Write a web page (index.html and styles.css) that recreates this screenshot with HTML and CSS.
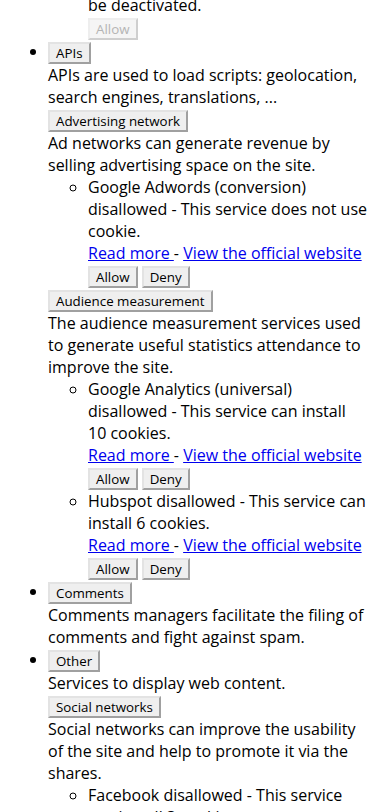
FILE: index.html
```html
<!DOCTYPE html>
<html lang="en">
<head>
<meta charset="utf-8">
<meta name="viewport" content="width=device-width, initial-scale=1">
<title>Cookie services</title>
<link rel="stylesheet" href="styles.css">
</head>
<body>
<ul class="cats">
  <li class="cat cat-open">
    <ul class="svcs">
      <li class="svc svc-cut">be deactivated.
        <div class="btns"><button class="btn" disabled>Allow</button></div>
      </li>
    </ul>
  </li>
  <li class="cat">
    <button class="btn">APIs</button>
    <div class="desc">APIs are used to load scripts: geolocation, search engines, translations, ...</div>
  </li>
  <li class="cat cat-open">
    <button class="btn">Advertising network</button>
    <div class="desc">Ad networks can generate revenue by selling advertising space on the site.</div>
    <ul class="svcs">
      <li class="svc">Google Adwords (conversion) disallowed - This service does not use cookie.
        <div class="links"><a href="#">Read more </a>- <a href="#">View the official website</a></div>
        <div class="btns"><button class="btn">Allow</button> <button class="btn">Deny</button></div>
      </li>
    </ul>
  </li>
  <li class="cat cat-open">
    <button class="btn">Audience measurement</button>
    <div class="desc">The audience measurement services used to generate useful statistics attendance to improve the site.</div>
    <ul class="svcs">
      <li class="svc">Google Analytics (universal) disallowed - This service can install 10 cookies.
        <div class="links"><a href="#">Read more </a>- <a href="#">View the official website</a></div>
        <div class="btns"><button class="btn">Allow</button> <button class="btn">Deny</button></div>
      </li>
      <li class="svc">Hubspot disallowed - This service can install 6 cookies.
        <div class="links"><a href="#">Read more </a>- <a href="#">View the official website</a></div>
        <div class="btns"><button class="btn">Allow</button> <button class="btn">Deny</button></div>
      </li>
    </ul>
  </li>
  <li class="cat">
    <button class="btn">Comments</button>
    <div class="desc">Comments managers facilitate the filing of comments and fight against spam.</div>
  </li>
  <li class="cat">
    <button class="btn">Other</button>
    <div class="desc">Services to display web content.</div>
  </li>
  <li class="cat cat-open">
    <button class="btn">Social networks</button>
    <div class="desc">Social networks can improve the usability of the site and help to promote it via the shares.</div>
    <ul class="svcs">
      <li class="svc">Facebook disallowed - This service can install 3 cookies.
        <div class="links"><a href="#">Read more </a>- <a href="#">View the official website</a></div>
        <div class="btns"><button class="btn">Allow</button> <button class="btn">Deny</button></div>
      </li>
    </ul>
  </li>
</ul>
</body>
</html>
```
FILE: styles.css
```css
html, body {
  background: #ffffff;
}

body {
  margin: 0 8px 8px;
  font-family: "Open Sans", "Noto Sans", sans-serif;
  font-size: 16px;
  color: #000000;
}

.cats {
  margin: -6px 0 16px;
  padding-left: 40px;
  list-style: disc;
}

.cat-open {
  display: block;
}

.svcs {
  margin: 0;
  padding-left: 40px;
  list-style: circle;
}

.svc-cut {
  list-style: none;
}

.links a {
  color: #0000ee;
  text-decoration: underline;
}

.btn {
  font-family: "Open Sans", "Noto Sans", sans-serif;
  font-size: 13.33px;
  line-height: normal;
  color: #000000;
  background: #efefef;
  padding: 0 6px;
  margin: 0;
  vertical-align: -1px;
  border-style: solid;
  border-width: 2px;
  border-color: #e3e3e3 #a0a0a0 #a0a0a0 #e3e3e3;
  border-radius: 0;
}

.btn:disabled {
  color: #b4b4b4;
  background: #f5f5f5;
  border-color: #eeeeee #cfcfcf #cfcfcf #eeeeee;
}
```
